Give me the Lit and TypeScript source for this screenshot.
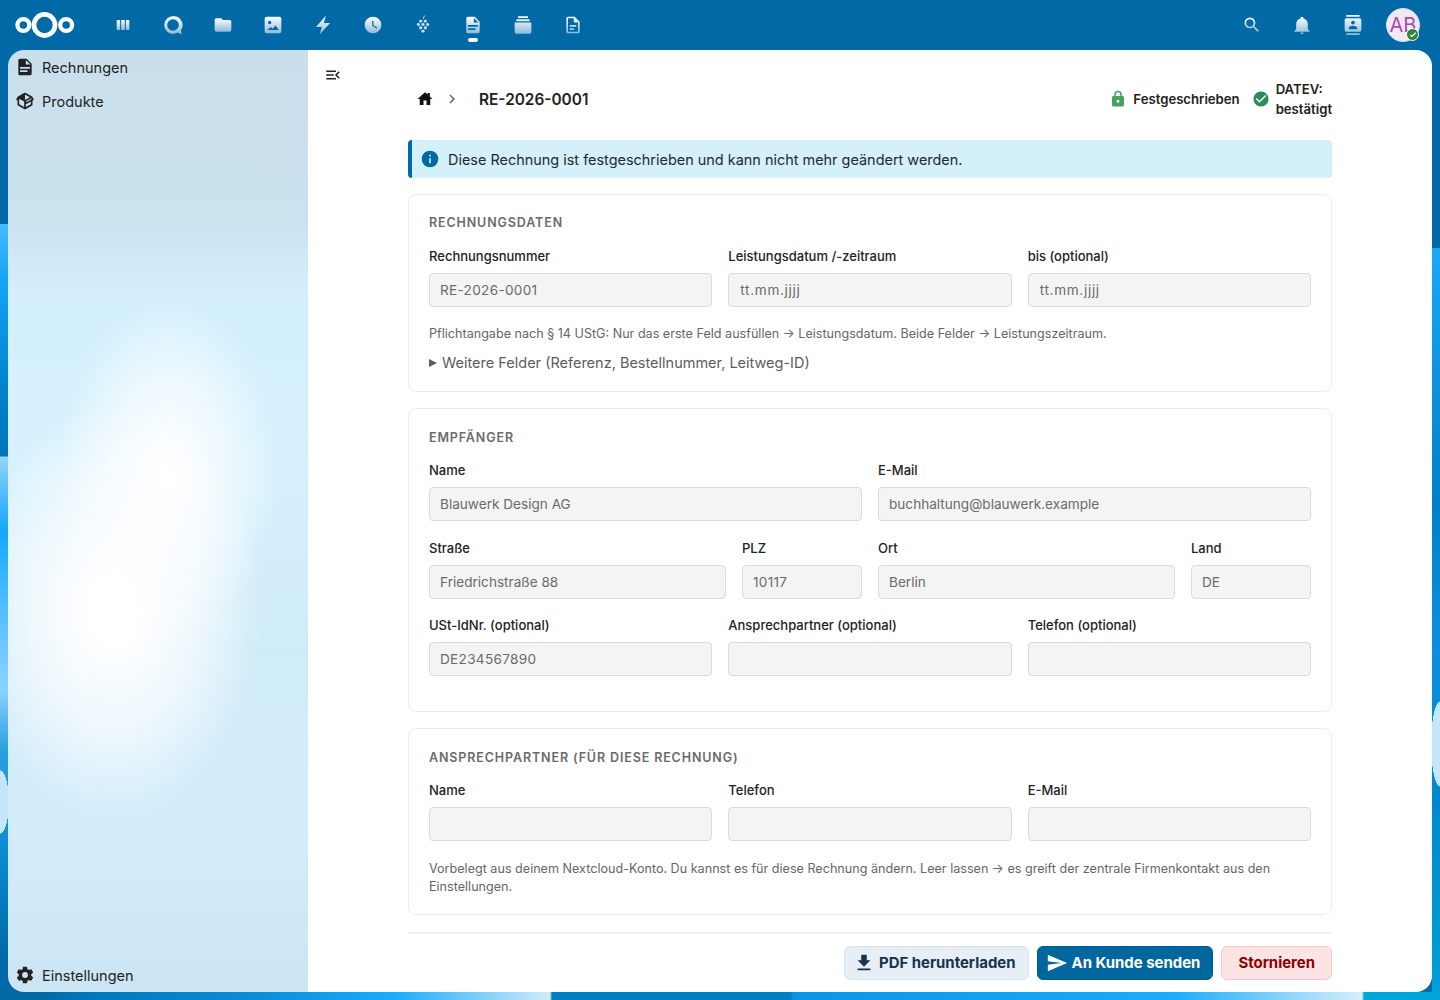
import { LitElement, css, html, svg } from "lit";
import { customElement } from "lit/decorators.js";

const P = {
	folder: "M10,4H4C2.89,4 2,4.89 2,6V18A2,2 0 0,0 4,20H20A2,2 0 0,0 22,18V8C22,6.89 21.1,6 20,6H12L10,4Z",
	bolt: "M15.500 .5 3.500 14.500H10.500L8 23.500 20.500 9.500H13Z",
	clock: "M12,2A10,10 0 0,0 2,12A10,10 0 0,0 12,22A10,10 0 0,0 22,12A10,10 0 0,0 12,2M16.2,16.2L11,13V7H12.5V12.2L17,14.9L16.2,16.2Z",
	doc: "M13,9H18.5L13,3.5V9M6,2H14L20,8V20A2,2 0 0,1 18,22H6C4.89,22 4,21.1 4,20V4C4,2.89 4.89,2 6,2M15,18V16H6V18H15M18,14V12H6V14H18Z",
	docOutline: "M6,2A2,2 0 0,0 4,4V20A2,2 0 0,0 6,22H18A2,2 0 0,0 20,20V8L14,2H6M6,4H13V9H18V20H6V4M8,12V14H16V12H8M8,16V18H13V16H8Z",
	search: "M9.5,3A6.5,6.5 0 0,1 16,9.5C16,11.11 15.41,12.59 14.44,13.73L14.71,14H15.5L20.5,19L19,20.5L14,15.5V14.71L13.73,14.44C12.59,15.41 11.11,16 9.5,16A6.5,6.5 0 0,1 3,9.5A6.5,6.5 0 0,1 9.5,3M9.5,5C7,5 5,7 5,9.5C5,12 7,14 9.5,14C12,14 14,12 14,9.5C14,7 12,5 9.5,5Z",
	bell: "M21,19V20H3V19L5,17V11C5,7.9 7.03,5.17 10,4.29C10,4.19 10,4.1 10,4A2,2 0 0,1 12,2A2,2 0 0,1 14,4C14,4.1 14,4.19 14,4.29C16.97,5.17 19,7.9 19,11V17L21,19M14,21A2,2 0 0,1 12,23A2,2 0 0,1 10,21",
	contacts: "M20,0H4V2H20V0M4,24H20V22H4V24M20,4H4C2.89,4 2,4.9 2,6V18A2,2 0 0,0 4,20H20A2,2 0 0,0 22,18V6C22,4.89 21.1,4 20,4M12,6.75A2.25,2.25 0 0,1 14.25,9A2.25,2.25 0 0,1 12,11.25A2.25,2.25 0 0,1 9.75,9A2.25,2.25 0 0,1 12,6.75M17,17H7V15.5C7,13.83 10.33,13 12,13C13.67,13 17,13.83 17,15.5V17Z",
	box: "M2,10.96C1.5,10.68 1.35,10.07 1.63,9.59L3.13,7C3.24,6.8 3.41,6.66 3.6,6.58L11.43,2.18C11.59,2.06 11.79,2 12,2C12.21,2 12.41,2.06 12.57,2.18L20.47,6.62C20.66,6.72 20.82,6.88 20.91,7.08L22.36,9.6C22.64,10.08 22.47,10.69 22,10.96L21,11.54V16.5C21,16.88 20.79,17.21 20.47,17.38L12.57,21.82C12.41,21.94 12.21,22 12,22C11.79,22 11.59,21.94 11.43,21.82L3.53,17.38C3.21,17.21 3,16.88 3,16.5V10.96C2.7,11.13 2.32,11.14 2,10.96M12,4.15V4.15L12,10.85V10.85L17.96,7.5L12,4.15M5,15.91L11,19.29V12.58L5,9.21V15.91M19,15.91V12.69L14,15.59C13.67,15.77 13.3,15.76 13,15.6V19.29L19,15.91M13.85,13.36L20.13,9.73L19.55,8.72L13.27,12.35L13.85,13.36Z",
	cog: "M12,15.5A3.5,3.5 0 0,1 8.5,12A3.5,3.5 0 0,1 12,8.5A3.5,3.5 0 0,1 15.5,12A3.5,3.5 0 0,1 12,15.5M19.43,12.97C19.47,12.65 19.5,12.33 19.5,12C19.5,11.67 19.47,11.34 19.43,11L21.54,9.37C21.73,9.22 21.78,8.95 21.66,8.73L19.66,5.27C19.54,5.05 19.27,4.96 19.05,5.05L16.56,6.05C16.04,5.66 15.5,5.32 14.87,5.07L14.5,2.42C14.46,2.18 14.25,2 14,2H10C9.75,2 9.54,2.18 9.5,2.42L9.13,5.07C8.5,5.32 7.96,5.66 7.44,6.05L4.95,5.05C4.73,4.96 4.46,5.05 4.34,5.27L2.34,8.73C2.21,8.95 2.27,9.22 2.46,9.37L4.57,11C4.53,11.34 4.5,11.67 4.5,12C4.5,12.33 4.53,12.65 4.57,12.97L2.46,14.63C2.27,14.78 2.21,15.05 2.34,15.27L4.34,18.73C4.46,18.95 4.73,19.03 4.95,18.95L7.44,17.94C7.96,18.34 8.5,18.68 9.13,18.93L9.5,21.58C9.54,21.82 9.75,22 10,22H14C14.25,22 14.46,21.82 14.5,21.58L14.87,18.93C15.5,18.67 16.04,18.34 16.56,17.94L19.05,18.95C19.27,19.03 19.54,18.95 19.66,18.73L21.66,15.27C21.78,15.05 21.73,14.78 21.54,14.63L19.43,12.97Z",
	home: "M10,20V14H14V20H19V12H22L18.500 8.850V4H15.500V6.150L12,3L2,12H5V20H10Z",
	chevron: "M8.59,16.58L13.17,12L8.59,7.41L10,6L16,12L10,18L8.59,16.58Z",
	lock: "M12,17A2,2 0 0,0 14,15C14,13.89 13.1,13 12,13A2,2 0 0,0 10,15A2,2 0 0,0 12,17M18,8A2,2 0 0,1 20,10V20A2,2 0 0,1 18,22H6A2,2 0 0,1 4,20V10C4,8.89 4.9,8 6,8H7V6A5,5 0 0,1 12,1A5,5 0 0,1 17,6V8H18M12,3A3,3 0 0,0 9,6V8H15V6A3,3 0 0,0 12,3Z",
	check: "M12 2C6.5 2 2 6.5 2 12S6.5 22 12 22 22 17.5 22 12 17.5 2 12 2M10 17L5 12L6.41 10.59L10 14.17L17.59 6.58L19 8L10 17Z",
	info: "M13,9H11V7H13M13,17H11V11H13M12,2A10,10 0 0,0 2,12A10,10 0 0,0 12,22A10,10 0 0,0 22,12A10,10 0 0,0 12,2Z",
	download: "M5,20H19V18H5M19,9H15V3H9V9H5L12,16L19,9Z",
	send: "M2,21L23,12L2,3V10L17,12L2,14V21Z",
	menuOpen: "M21,15.61L19.59,17L14.58,12L19.59,7L21,8.39L17.44,12L21,15.61M3,6H16V8H3V6M3,13V11H13V13H3M3,18V16H16V18H3Z",
};

const icon = (d: string, cls = "") =>
	html`<svg class="icon ${cls}" viewBox="0 0 24 24"><path d=${d} /></svg>`;

// header icons are filled with the white gradient from the hidden defs
const g = "url(#hg)";
const navIcon = (body: unknown) =>
	html`<svg class="hicon" viewBox="0 0 24 24" fill=${g}>${body}</svg>`;

const appIcons = [
	svg`<path d="M3 6.5A1.5 1.5 0 0 1 4.5 5H6.500A1.500 1.500 0 0 1 8 6.500V17.500A1.500 1.500 0 0 1 6.500 19H4.500A1.500 1.500 0 0 1 3 17.500ZM9.500 5H14.500V19H9.500ZM16 6.500A1.500 1.500 0 0 1 17.500 5H19.500A1.500 1.500 0 0 1 21 6.500V17.500A1.500 1.500 0 0 1 19.500 19H17.500A1.500 1.500 0 0 1 16 17.500Z" transform="translate(12 12) scale(.85) translate(-12 -12)" />`,
	svg`<path fill-rule="evenodd" d="M12 1.500A10.500 10.500 0 1 0 17.600 20.900L22.500 23 21.400 18.200A10.500 10.500 0 0 0 12 1.500ZM12 5A7 7 0 1 1 12 19 7 7 0 0 1 12 5Z" />`,
	svg`<path d=${P.folder} />`,
	svg`<path fill-rule="evenodd" d="M4.500 2H19.500A2.500 2.500 0 0 1 22 4.500V19.500A2.500 2.500 0 0 1 19.500 22H4.500A2.500 2.500 0 0 1 2 19.500V4.500A2.500 2.500 0 0 1 4.500 2ZM8 7A2 2 0 1 0 8 11 2 2 0 0 0 8 7ZM5 18H19L15 12.500 11.500 16.500 9.500 14.500Z" />`,
	svg`<path d=${P.bolt} />`,
	svg`<path d=${P.clock} />`,
	svg`<path d="M13.200 .5 11.500 5.500H12.500L14.200 .8Z" /><circle cx="9.200" cy="7.500" r="1.900" /><circle cx="14.800" cy="7.500" r="1.900" /><circle cx="6.500" cy="11.500" r="1.900" /><circle cx="12" cy="11.500" r="1.900" /><circle cx="17.500" cy="11.500" r="1.900" /><circle cx="9.200" cy="15.500" r="1.900" /><circle cx="14.800" cy="15.500" r="1.900" /><circle cx="12" cy="19.500" r="1.900" />`,
	svg`<path d=${P.doc} />`,
	svg`<path d="M6 1.500H18V3.500H6ZM4 5H20V7.500H4ZM2 9H22V20.500A2 2 0 0 1 20 22.500H4A2 2 0 0 1 2 20.500Z" />`,
	svg`<path d=${P.docOutline} />`,
];

type Field = { label: string; value?: string; ph?: string; num?: boolean };

const rechnung: Field[] = [
	{ label: "Rechnungsnummer", value: "RE-2026-0001", num: true },
	{ label: "Leistungsdatum /-zeitraum", ph: "tt.mm.jjjj" },
	{ label: "bis (optional)", ph: "tt.mm.jjjj" },
];
const empf1: Field[] = [
	{ label: "Name", value: "Blauwerk Design AG" },
	{ label: "E-Mail", value: "buchhaltung@blauwerk.example" },
];
const empf2: Field[] = [
	{ label: "Straße", value: "Friedrichstraße 88" },
	{ label: "PLZ", value: "10117", num: true },
	{ label: "Ort", value: "Berlin" },
	{ label: "Land", value: "DE" },
];
const empf3: Field[] = [
	{ label: "USt-IdNr. (optional)", value: "DE234567890", num: true },
	{ label: "Ansprechpartner (optional)" },
	{ label: "Telefon (optional)" },
];
const kontakt: Field[] = [{ label: "Name" }, { label: "Telefon" }, { label: "E-Mail" }];

const fields = (list: Field[], cls: string) => html`
	<div class="row ${cls}">
		${list.map(
			(f) => html`<label class="field">
				<span>${f.label}</span>
				<input
					class="${f.ph ? "date" : ""} ${f.num ? "num" : ""}"
					readonly
					disabled
					.value=${f.value ?? f.ph ?? ""}
				/>
			</label>`,
		)}
	</div>
`;

@customElement("app-root")
export class AppRoot extends LitElement {
	render() {
		return html`
			<svg class="defs" aria-hidden="true">
				<defs>
					<linearGradient id="hg" x1="0" y1="0" x2="0" y2="1">
						<stop offset="0" stop-color="#fff" />
						<stop offset="1" stop-color="#fff" stop-opacity=".55" />
					</linearGradient>
				</defs>
			</svg>
			<header>
				<svg class="logo" viewBox="0 0 62 28" fill="none" stroke="#fff">
					<circle cx="8.500" cy="14" r="6" stroke-width="4.400" />
					<circle cx="30" cy="14" r="10.700" stroke-width="4.800" />
					<circle cx="52" cy="14" r="6" stroke-width="4.400" />
				</svg>
				<nav class="apps">
					${appIcons.map(
						(b, i) => html`<div class="app ${i === 7 ? "active" : ""}">${navIcon(b)}</div>`,
					)}
				</nav>
				<div class="right">
					<div class="app">${navIcon(svg`<path d=${P.search} />`)}</div>
					<div class="app">${navIcon(svg`<path d=${P.bell} />`)}</div>
					<div class="app">${navIcon(svg`<path d=${P.contacts} />`)}</div>
					<div class="avatar">
						AB
						<span class="status"><svg viewBox="0 0 24 24"><path d="M9.500 17.500 4.500 12.500 6.500 10.500 9.500 13.500 17.500 5.500 19.500 7.500Z" /></svg></span>
					</div>
				</div>
			</header>
			<div class="body">
				<aside>
					<div>
						<a class="nav">${icon(P.doc)}Rechnungen</a>
						<a class="nav">${icon(P.box)}Produkte</a>
					</div>
					<a class="nav">${icon(P.cog)}Einstellungen</a>
				</aside>
				<main>
					<button class="toggle">${icon(P.menuOpen)}</button>
					<div class="inner">
						<div class="top">
							<div class="crumbs">
								<span class="home">${icon(P.home)}</span>
								<span class="chev">${icon(P.chevron)}</span>
								<strong>RE-2026-0001</strong>
							</div>
							<div class="badges">
								<span class="badge">${icon(P.lock, "green")}Festgeschrieben</span>
								<span class="badge">${icon(P.check, "green2")}<span class="datev">DATEV: bestätigt</span></span>
							</div>
						</div>
						<div class="alert">
							${icon(P.info)}
							<span>Diese Rechnung ist festgeschrieben und kann nicht mehr geändert werden.</span>
						</div>
						<section class="card one">
							<h3>Rechnungsdaten</h3>
							${fields(rechnung, "c3")}
							<p class="hint">Pflichtangabe nach § 14 UStG: Nur das erste Feld ausfüllen → Leistungsdatum. Beide Felder → Leistungszeitraum.</p>
							<details><summary>Weitere Felder (Referenz, Bestellnummer, Leitweg-ID)</summary></details>
						</section>
						<section class="card two">
							<h3>Empfänger</h3>
							${fields(empf1, "c2")} ${fields(empf2, "c4")} ${fields(empf3, "c3")}
						</section>
						<section class="card three">
							<h3>Ansprechpartner (für diese Rechnung)</h3>
							${fields(kontakt, "c3")}
							<p class="hint">Vorbelegt aus deinem Nextcloud-Konto. Du kannst es für diese Rechnung ändern. Leer lassen → es greift der zentrale Firmenkontakt aus den Einstellungen.</p>
						</section>
						<div class="actions">
							<button class="btn soft">${icon(P.download)}PDF herunterladen</button>
							<button class="btn primary">${icon(P.send)}An Kunde senden</button>
							<button class="btn danger">Stornieren</button>
						</div>
					</div>
				</main>
			</div>
		`;
	}

	static styles = css`
		:host {
			display: flex;
			flex-direction: column;
			width: 1440px;
			height: 1000px;
			overflow: hidden;
			font-family: Inter, "Liberation Sans", sans-serif;
			color: #222;
			background-color: #0069a6;
			/* only the thin strips round the panels show of the wallpaper */
			background-image:
				radial-gradient(ellipse 9px 32px at 0 802px, #c4e6fb 97%, transparent 100%),
				radial-gradient(ellipse 9px 43px at 100% 744px, #c4e6fb 97%, transparent 100%),
				linear-gradient(90deg, #0069a6 40px, #0078bd 90px, #0a8cd8 250px, #1aacff 395px, #d0ecfa 550px, #0080c4 552px, #0080c4 791px, #0a94e6 793px, #1aacff 1175px, #d6f0fa 1362px, #00a5dc 1364px),
				linear-gradient(180deg, #0069a6 224px, #45bcff 224px, #14a4f6 280px, #0080c8 400px, #0075b8 456px, #92d3f6 457px, #14a8fb 530px, #4cbcff 600px, #8ad3ff 690px, #2b9fe0 750px, #0a8ad0 860px, #0069a6 960px),
				linear-gradient(180deg, #0069a6 248px, #1aa8f8 248px, #0080c8 500px, #0a90e0 650px, #0088cc 800px, #00a0d8 1000px);
			background-size: 100% 100%, 100% 100%, 100% 8px, 8px 100%, 8px 100%;
			background-position: 0 0, 0 0, 0 100%, 0 0, 100% 0;
			background-repeat: no-repeat;
		}
		.defs {
			position: absolute;
			width: 0;
			height: 0;
		}
		.icon {
			width: 18px;
			height: 18px;
			flex: none;
			fill: currentColor;
		}
		header {
			height: 50px;
			flex: none;
			display: flex;
			align-items: center;
			padding: 0 20px 0 15px;
			box-sizing: border-box;
		}
		.logo {
			width: 61px;
			height: 28px;
			flex: none;
		}
		.apps {
			display: flex;
			margin-left: 22px;
		}
		.app {
			width: 50px;
			height: 50px;
			display: flex;
			align-items: center;
			justify-content: center;
			position: relative;
			flex: none;
		}
		.hicon {
			width: 20px;
			height: 20px;
		}
		.app.active::after {
			content: "";
			position: absolute;
			left: 20px;
			bottom: 8px;
			width: 10px;
			height: 4px;
			border-radius: 2px;
			background: #fff;
		}
		.right {
			margin-left: auto;
			display: flex;
			align-items: center;
		}
		.right .app {
			width: 50.5px;
		}
		.avatar {
			width: 34px;
			height: 34px;
			margin-left: 8px;
			border-radius: 50%;
			background: #f3e9f5;
			color: #a64bb4;
			font-size: 20px;
			display: flex;
			align-items: center;
			justify-content: center;
			position: relative;
			box-sizing: border-box;
			border: 1px solid #cfe0ec;
		}
		.status {
			position: absolute;
			right: 0;
			bottom: 0;
			width: 13px;
			height: 13px;
			box-sizing: border-box;
			border-radius: 50%;
			background: #2e8540;
			border: 1px solid #fff;
			display: flex;
			align-items: center;
			justify-content: center;
		}
		.status svg {
			width: 10px;
			height: 10px;
			fill: #fff;
		}
		.body {
			flex: 1;
			min-height: 0;
			display: flex;
			padding: 0 8px 8px;
		}
		aside {
			width: 300px;
			flex: none;
			display: flex;
			flex-direction: column;
			justify-content: space-between;
			border-radius: 16px 0 0 16px;
			box-sizing: border-box;
			background:
				radial-gradient(ellipse 110px 170px at 160px 420px, rgba(255, 255, 255, 0.95) 10%, rgba(255, 255, 255, 0.55) 55%, rgba(255, 255, 255, 0) 100%),
				radial-gradient(ellipse 150px 210px at 105px 560px, #fff 15%, rgba(255, 255, 255, 0.65) 55%, rgba(255, 255, 255, 0) 100%),
				linear-gradient(180deg, #cadfec 0, #cbe2ef 170px, #d4f0fc 250px, #d6f1fd 430px, #d0ebf8 600px, #d3edfb 760px, #cbe5f4 100%);
		}
		.nav {
			height: 34px;
			display: flex;
			align-items: center;
			gap: 7px;
			padding-left: 7px;
			font-size: 14.5px;
			color: #222;
		}
		.nav .icon {
			width: 20px;
			height: 20px;
		}
		main {
			flex: 1;
			min-width: 0;
			background: #fff;
			border-radius: 0 16px 16px 0;
			position: relative;
			overflow: hidden;
		}
		.toggle {
			position: absolute;
			left: 16px;
			top: 16px;
			width: 18px;
			height: 18px;
			padding: 0;
			border: 0;
			background: none;
			color: #222;
		}
		.inner {
			width: 924px;
			margin: 0 auto;
			padding-top: 29px;
		}
		.top {
			display: flex;
			align-items: center;
			justify-content: space-between;
			margin-bottom: 21px;
		}
		.crumbs {
			display: flex;
			align-items: center;
		}
		.home {
			width: 34px;
			display: flex;
			justify-content: center;
			color: #111;
		}
		.chev {
			width: 20px;
			display: flex;
			justify-content: center;
			color: #666;
		}
		.crumbs strong {
			margin-left: 17px;
			font-size: 15.4px;
			font-weight: 600;
			color: #222;
		}
		.badges {
			display: flex;
			align-items: center;
			gap: 12px;
			font-size: 13.15px;
			font-weight: 600;
			line-height: 20px;
		}
		.badge {
			display: flex;
			align-items: center;
			gap: 6px;
		}
		.green {
			color: #4aa05f;
		}
		.green2 {
			color: #2e8b57;
		}
		.datev {
			width: min-content;
			display: block;
		}
		.alert {
			height: 38px;
			box-sizing: border-box;
			display: flex;
			align-items: center;
			gap: 8px;
			padding-left: 8px;
			margin-bottom: 16px;
			background: #d4f0f9;
			border-left: 4px solid #0069a6;
			border-radius: 4px;
			font-size: 14.45px;
			color: #1c2a33;
		}
		.alert .icon {
			width: 20px;
			height: 20px;
			color: #0069a6;
		}
		.card {
			border: 1px solid #ededed;
			border-radius: 8px;
			padding: 20px;
			margin-bottom: 16px;
		}
		.card.one {
			padding-bottom: 17px;
		}
		.card.one h3 {
			margin: 0 0 15.5px;
		}
		.card.two {
			padding-bottom: 34.5px;
		}
		.card.three {
			padding-bottom: 18px;
		}
		.card.three .hint {
			margin-top: 19px;
		}
		h3 {
			margin: 1px 0 15.5px;
			font-size: 12.5px;
			line-height: 16px;
			font-weight: 600;
			letter-spacing: 0.07em;
			text-transform: uppercase;
			color: #6b6b6b;
		}
		.row {
			display: grid;
			gap: 16px;
		}
		.row + .row {
			margin-top: 17.5px;
		}
		.c2 {
			grid-template-columns: 1fr 1fr;
		}
		.c3 {
			grid-template-columns: 1fr 1fr 1fr;
		}
		.c4 {
			grid-template-columns: 1fr 120px 1fr 120px;
		}
		.field {
			display: block;
			min-width: 0;
		}
		.field span {
			display: block;
			font-size: 13px;
			line-height: 18px;
			font-weight: 500;
			color: #222;
			margin-bottom: 8px;
		}
		input {
			display: block;
			width: 100%;
			height: 34px;
			box-sizing: border-box;
			padding: 0 10px;
			border: 1px solid #dbdbdb;
			border-radius: 4px;
			background: #f4f4f4;
			font: 400 13.6px Inter, "Liberation Sans", sans-serif;
			color: #6b6b6b;
			opacity: 1;
		}
		input.num {
			letter-spacing: 0.3px;
		}
		input.date {
			letter-spacing: 0.05em;
			padding-left: 11px;
		}
		.hint {
			margin: 18px 0 0;
			font-size: 12.6px;
			line-height: 18px;
			color: #666;
		}
		details {
			margin-top: 9px;
			font-size: 14.5px;
			line-height: 22px;
			color: #5c5c5c;
		}
		summary {
			list-style: none;
			display: flex;
			align-items: center;
			gap: 5px;
		}
		summary::before {
			content: "";
			width: 0;
			height: 0;
			border-left: 8px solid #5c5c5c;
			border-top: 4.5px solid transparent;
			border-bottom: 4.5px solid transparent;
		}
		.actions {
			border-top: 2px solid #f2f2f2;
			margin-top: 17px;
			padding-top: 12px;
			display: flex;
			justify-content: flex-end;
			gap: 8px;
		}
		.btn {
			height: 34px;
			box-sizing: border-box;
			display: flex;
			align-items: center;
			gap: 4px;
			padding: 0 12px 0 8px;
			border-radius: 6px;
			border: 1px solid;
			font: 700 14.95px Inter, "Liberation Sans", sans-serif;
		}
		.btn .icon {
			width: 22px;
			height: 22px;
		}
		.soft {
			background: #e7eef5;
			border-color: #d9e3ec;
			color: #17324d;
		}
		.primary {
			background: #00679e;
			border-color: #005c8e;
			color: #fff;
		}
		.danger {
			background: #fde4e4;
			border-color: #fbc9c9;
			color: #8b0000;
			padding: 0 16px;
		}
	`;
}

declare global {
	interface HTMLElementTagNameMap {
		"app-root": AppRoot;
	}
}
